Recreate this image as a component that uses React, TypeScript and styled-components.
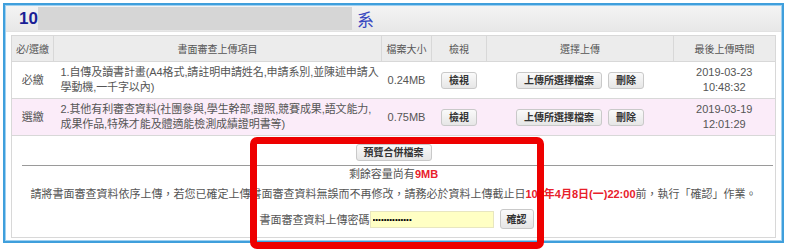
import React from 'react';
import styled, { createGlobalStyle } from 'styled-components';

const GlobalStyle = createGlobalStyle`
    html, body {
        margin: 0;
        padding: 0;
        background: #ffffff;
    }
    body {
        font-family: "Liberation Sans", "Noto Sans CJK TC", sans-serif;
        font-size: 11px;
        color: #555;
    }
`;

const textColor = '#555';
const lineColor = '#d8d8d8';

const Page = styled.div`
    position: relative;
    width: 795px;
    height: 251px;
    padding: 3px 0 0 3px;
    box-sizing: border-box;
`;

const Panel = styled.div`
    width: 781px;
    height: 240px;
    box-sizing: border-box;
    border: 2px solid #3f9fdc;
    box-shadow: inset 0 0 0 1px #9fd0f0;
    background: #fff;
    display: flex;
    flex-direction: column;
`;

const PanelHeader = styled.div`
    height: 27px;
    margin: 1px 1px 0 1px;
    background: linear-gradient(#f4f4f4, #e7e7e7);
    border-bottom: 1px solid #e2e2e2;
    display: flex;
    align-items: center;
    padding-left: 13px;
`;

const TitleNum = styled.span`
    font-size: 17px;
    font-weight: bold;
    color: #1b1f96;
`;

const Redacted = styled.span`
    display: inline-block;
    width: 314px;
    height: 23px;
    background: #d6d6d6;
`;

const TitleDept = styled.span`
    font-size: 17px;
    color: #3848c0;
    margin-left: 5px;
`;

const Body = styled.div`
    padding: 3px 8px 5px 6px;
`;

const Table = styled.table`
    width: 764px;
    border-collapse: collapse;
    table-layout: fixed;
    border: 1px solid ${lineColor};
`;

const Th = styled.th`
    height: 25px;
    background: #ececec;
    border: 1px solid ${lineColor};
    font-weight: normal;
    color: ${textColor};
    font-size: 10px;
    padding: 0;
`;

const Row = styled.tr<{ $pink?: boolean }>`
    background: ${(p) => (p.$pink ? '#fbecf9' : '#fff')};
`;

const Td = styled.td<{ $align?: string }>`
    border: 1px solid ${lineColor};
    border-left: none;
    border-right: none;
    padding: ${(p) => (p.$align === 'left' ? '3px 0 3px 7px' : '3px 4px')};
    text-align: ${(p) => p.$align || 'center'};
    color: ${textColor};
    line-height: 15px;
    height: 30px;
`;

const TitleLine = styled.div`
    white-space: nowrap;
    letter-spacing: -0.1px;
`;

const SmallButton = styled.button`
    font-family: inherit;
    font-size: 10px;
    font-weight: bold;
    color: #333;
    height: 17px;
    padding: 0 7px;
    border: 1px solid #c9c9c9;
    border-radius: 3px;
    background: linear-gradient(#fafafa, #e6e6e6);
    line-height: 15px;
    cursor: pointer;
    & + & {
        margin-left: 6px;
    }
`;

const FooterCell = styled.td`
    padding: 8px 0 0 0;
    text-align: center;
    height: 93px;
    vertical-align: top;
`;

const Rule = styled.div`
    height: 1px;
    background: #9a9a9a;
    margin: 4px 2px 0 10px;
`;

const Line = styled.div`
    line-height: 15px;
    color: ${textColor};
`;

const Capacity = styled(Line)`
    margin-top: 1px;
`;

const Notice = styled(Line)`
    margin-top: 5px;
`;

const Red = styled.span`
    color: #e8202a;
    font-weight: bold;
`;

const PasswordRow = styled.div`
    margin-top: 7px;
    display: flex;
    justify-content: center;
    align-items: center;
    padding-left: 6px;
`;

const PasswordInput = styled.input`
    width: 118px;
    height: 15px;
    border: 1px solid #e8e6c0;
    background: #ffffc4;
    font-size: 8px;
    padding: 0 2px;
    margin: 0 6px 0 0;
    outline: none;
`;

const ConfirmButton = styled(SmallButton)`
    height: 20px;
    padding: 0 6px;
`;

const Highlight = styled.div`
    position: absolute;
    left: 250px;
    top: 137px;
    width: 294px;
    height: 112px;
    box-sizing: border-box;
    border: 7px solid #ee0000;
    border-radius: 7px;
    pointer-events: none;
`;

type Item = {
    kind: string;
    title: string[];
    size: string;
    date: string;
    time: string;
    pink?: boolean;
};

const items: Item[] = [
    {
        kind: '必繳',
        title: ['1.自傳及讀書計畫(A4格式,請註明申請姓名,申請系別,並陳述申請入', '學動機,一千字以內)'],
        size: '0.24MB',
        date: '2019-03-23',
        time: '10:48:32',
    },
    {
        kind: '選繳',
        title: ['2.其他有利審查資料(社團參與,學生幹部,證照,競賽成果,語文能力,', '成果作品,特殊才能及體適能檢測成績證明書等)'],
        size: '0.75MB',
        date: '2019-03-19',
        time: '12:01:29',
        pink: true,
    },
];

export default function App() {
    return (
        <Page>
            <GlobalStyle />
            <Panel>
                <PanelHeader>
                    <TitleNum>10</TitleNum>
                    <Redacted />
                    <TitleDept>系</TitleDept>
                </PanelHeader>
                <Body>
                    <Table>
                        <colgroup>
                            <col style={{ width: 42 }} />
                            <col style={{ width: 328 }} />
                            <col style={{ width: 50 }} />
                            <col style={{ width: 55 }} />
                            <col style={{ width: 187 }} />
                            <col style={{ width: 102 }} />
                        </colgroup>
                        <thead>
                            <tr>
                                <Th>必/選繳</Th>
                                <Th>書面審查上傳項目</Th>
                                <Th>檔案大小</Th>
                                <Th>檢視</Th>
                                <Th>選擇上傳</Th>
                                <Th>最後上傳時間</Th>
                            </tr>
                        </thead>
                        <tbody>
                            {items.map((it) => (
                                <Row key={it.kind} $pink={it.pink}>
                                    <Td>{it.kind}</Td>
                                    <Td $align="left">
                                        {it.title.map((t) => (
                                            <TitleLine key={t}>{t}</TitleLine>
                                        ))}
                                    </Td>
                                    <Td>{it.size}</Td>
                                    <Td>
                                        <SmallButton>檢視</SmallButton>
                                    </Td>
                                    <Td>
                                        <SmallButton>上傳所選擇檔案</SmallButton>
                                        <SmallButton>刪除</SmallButton>
                                    </Td>
                                    <Td>
                                        {it.date}
                                        <br />
                                        {it.time}
                                    </Td>
                                </Row>
                            ))}
                            <tr>
                                <FooterCell colSpan={6}>
                                    <SmallButton>預覽合併檔案</SmallButton>
                                    <Rule />
                                    <Capacity>
                                        剩餘容量尚有<Red>9MB</Red>
                                    </Capacity>
                                    <Notice>
                                        請將書面審查資料依序上傳，若您已確定上傳書面審查資料無誤而不再修改，請務必於資料上傳截止日
                                        <Red>108年4月8日(一)22:00</Red>前，執行「確認」作業。
                                    </Notice>
                                    <PasswordRow>
                                        書面審查資料上傳密碼
                                        <PasswordInput type="password" defaultValue="••••••••••••••" />
                                        <ConfirmButton>確認</ConfirmButton>
                                    </PasswordRow>
                                </FooterCell>
                            </tr>
                        </tbody>
                    </Table>
                </Body>
            </Panel>
            <Highlight />
        </Page>
    );
}
